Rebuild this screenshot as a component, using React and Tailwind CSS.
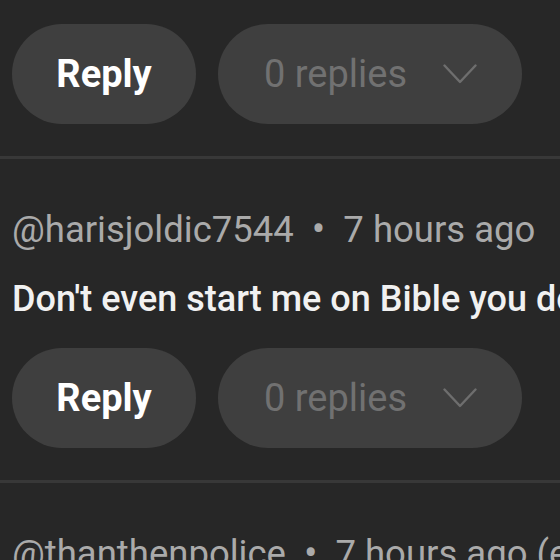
import React from "react";

const comments = [
  {
    id: 1,
    author: "@harisjoldic7544",
    time: "7 hours ago",
    text: "Don't even start me on Bible you don't even know what it says",
  },
  {
    id: 2,
    author: "@thanthenpolice",
    time: "7 hours ago (edited)",
    text: "",
  },
];

const Chevron = () => (
  <svg width="34" height="20" viewBox="0 0 34 20" fill="none">
    <polyline
      points="1.5,1.5 17,18 32.5,1.5"
      stroke="#6e6e6e"
      strokeWidth="2.4"
      strokeLinecap="round"
      strokeLinejoin="round"
    />
  </svg>
);

const Actions = () => (
  <div className="flex items-center gap-[22px]">
    <button className="h-[100px] w-[184px] rounded-full bg-[#3f3f3f] text-[38px] font-bold text-white flex items-center justify-center">
      Reply
    </button>
    <button className="h-[100px] w-[304px] rounded-full bg-[#3f3f3f] pl-[46px] pr-[45px] flex items-center justify-between text-[38px] text-[#717171]">
      <span>0 replies</span>
      <Chevron />
    </button>
  </div>
);

const Comment = ({ comment }) => (
  <div className="pl-[12px] pt-[46px] pb-[32px] border-b-[3px] border-[#383838]">
    <div className="flex items-center text-[36.5px] leading-[50px] text-[#aaaaaa] whitespace-nowrap">
      <span>{comment.author}</span>
      <span className="mx-[18px] text-[40px] leading-[50px]">•</span>
      <span>{comment.time}</span>
    </div>
    <p className="mt-[19px] text-[36px] leading-[50px] font-medium text-[#f1f1f1] whitespace-nowrap">
      {comment.text}
    </p>
    <div className="mt-[24px]">
      <Actions />
    </div>
  </div>
);

export default function App() {
  return (
    <div
      className="w-[560px] h-[560px] overflow-hidden bg-[#272727]"
      style={{ fontFamily: "Roboto, 'Liberation Sans', sans-serif" }}
    >
      <div className="pl-[12px] pt-[24px] pb-[32px] border-b-[3px] border-[#383838]">
        <Actions />
      </div>
      {comments.map((c) => (
        <Comment key={c.id} comment={c} />
      ))}
    </div>
  );
}
